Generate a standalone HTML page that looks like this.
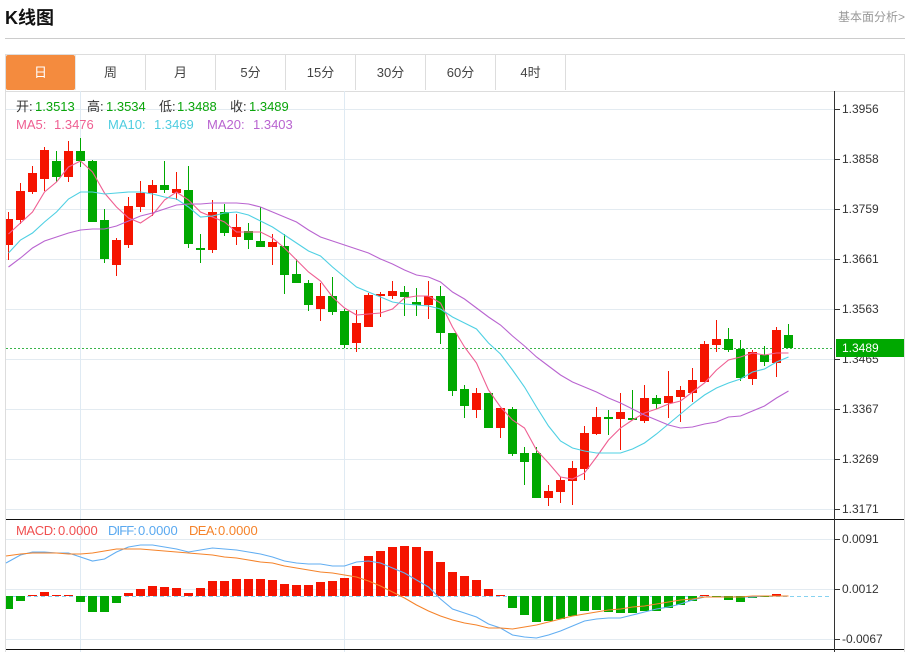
<!DOCTYPE html>
<html lang="zh">
<head>
<meta charset="utf-8">
<title>K线图</title>
<style>
html,body{margin:0;padding:0;background:#fff;}
body{width:911px;height:652px;overflow:hidden;position:relative;font-family:"Liberation Sans","Noto Sans CJK SC",sans-serif;}
.a{position:absolute;white-space:nowrap;}
.tab{position:absolute;top:55px;height:35px;width:69px;line-height:36px;text-align:center;font-size:13px;color:#444;border-right:1px solid #ddd;}
.l{font-size:13px;line-height:16px;}
.ax{position:absolute;left:842px;font-size:12px;line-height:14px;color:#333;white-space:nowrap;}
</style>
</head>
<body>
<div class="a" style="left:5px;top:7px;font-size:18px;line-height:22px;font-weight:bold;color:#111;">K线图</div>
<div class="a" style="left:838px;top:10px;font-size:12px;line-height:14px;color:#999;">基本面分析&gt;</div>
<div class="a" style="left:5px;top:38px;width:900px;height:1px;background:#ccc;"></div>

<div class="a" style="left:5px;top:54px;width:898px;height:36px;border:1px solid #ddd;"></div>
<div class="a" style="left:6px;top:55px;width:69px;height:35px;background:#f48b3e;border-radius:2px;"></div>
<div class="tab" style="left:6px;color:#fff;border-right:1px solid #e8e8e8;">日</div>
<div class="tab" style="left:76px;">周</div>
<div class="tab" style="left:146px;">月</div>
<div class="tab" style="left:216px;">5分</div>
<div class="tab" style="left:286px;">15分</div>
<div class="tab" style="left:356px;">30分</div>
<div class="tab" style="left:426px;">60分</div>
<div class="tab" style="left:496px;">4时</div>

<svg class="a" style="left:0;top:0;" width="911" height="652" viewBox="0 0 911 652" fill="none">
<!-- frame -->
<path d="M5.5 91V652M904.5 91V652" stroke="#ddd"/>
<!-- grid -->
<path d="M6 109.5H834M6 159.5H834M6 209.5H834M6 259.5H834M6 309.5H834M6 359.5H834M6 409.5H834M6 459.5H834M6 509.5H834M6 539.5H834M6 589.5H834M6 639.5H834" stroke="#e3ebf1"/>
<path d="M80.5 91V652M344.5 91V652" stroke="#dfeaf3"/>
<!-- last price -->
<path d="M6 348.5H834" stroke="#39b54a" stroke-dasharray="2 2"/>
<!-- green wicks -->
<path stroke="#00a800" d="M56.5 151V182M80.5 138V167M92.5 160V222M104.5 209V263M164.5 161V193M188.5 166V248M200.5 234V263M224.5 204V236M248.5 223V249M260.5 207V247M284.5 234V294M296.5 259V283M308.5 280V311M332.5 277V315M344.5 309V348M404.5 286V316M416.5 288V316M440.5 286V344M452.5 333V396M464.5 385V418M512.5 407V456M524.5 447V485M536.5 447V498M608.5 410V435M632.5 390V420M656.5 395V409M728.5 328V352M740.5 340V381M764.5 346V366M788.5 324V348"/>
<!-- green bodies -->
<path fill="#00a800" d="M52 161h9v16h-9zM76 151h9v10h-9zM88 161h9v61h-9zM100 220h9v39h-9zM160 185h9v5h-9zM184 190h9v54h-9zM196 248h9v2h-9zM220 212h9v21h-9zM244 231h9v9h-9zM256 241h9v6h-9zM280 246h9v29h-9zM292 274h9v9h-9zM304 283h9v22h-9zM328 296h9v16h-9zM340 311h9v34h-9zM400 292h9v5h-9zM412 302h9v3h-9zM436 296h9v37h-9zM448 333h9v58h-9zM460 389h9v17h-9zM484 393h9v35h-9zM508 409h9v45h-9zM520 453h9v9h-9zM532 453h9v45h-9zM604 417h9v2h-9zM628 418h9v2h-9zM652 398h9v6h-9zM724 339h9v11h-9zM736 349h9v29h-9zM760 355h9v7h-9zM784 335h9v13h-9z"/>
<!-- red wicks -->
<path stroke="#f51400" d="M8.5 212V260M20.5 183V224M32.5 166V194M44.5 147V191M68.5 141V182M116.5 238V276M128.5 197V248M140.5 181V212M152.5 180V216M176.5 172V200M212.5 200V253M236.5 214V245M272.5 234V265M320.5 283V321M356.5 310V352M368.5 293V327M380.5 292V317M392.5 281V299M428.5 281V319M476.5 388V418M500.5 408V438M548.5 485V506M560.5 477V503M572.5 461V505M584.5 426V480M596.5 407V435M620.5 393V450M644.5 385V423M668.5 371V418M680.5 386V422M692.5 368V402M704.5 341V382M716.5 320V352M752.5 350V385M776.5 327V377"/>
<!-- red bodies -->
<path fill="#f51400" d="M6 219h7v26H6zM16 191h9v29h-9zM28 173h9v19h-9zM40 150h9v29h-9zM64 151h9v26h-9zM112 240h9v25h-9zM124 206h9v39h-9zM136 193h9v14h-9zM148 185h9v8h-9zM172 189h9v4h-9zM208 212h9v38h-9zM232 227h9v10h-9zM268 242h9v5h-9zM316 296h9v13h-9zM352 323h9v20h-9zM364 295h9v32h-9zM376 294h9v2h-9zM388 291h9v5h-9zM424 296h9v9h-9zM472 393h9v17h-9zM496 408h9v20h-9zM544 491h9v7h-9zM556 480h9v12h-9zM568 468h9v13h-9zM580 433h9v36h-9zM592 417h9v17h-9zM616 412h9v7h-9zM640 398h9v23h-9zM664 396h9v7h-9zM676 390h9v7h-9zM688 380h9v13h-9zM700 344h9v38h-9zM712 339h9v6h-9zM748 352h9v27h-9zM772 330h9v33h-9z"/>
<!-- MA lines -->
<polyline stroke="#ef5f92" stroke-width="1.1" points="8.5,234 20.5,223 32.5,212 44.5,192 56.5,182 68.5,167 80.5,161 92.5,172 104.5,193 116.5,207 128.5,218 140.5,223 152.5,215 164.5,200 176.5,192 188.5,200 200.5,212 212.5,217 224.5,222 236.5,232 248.5,232 260.5,232 272.5,238 284.5,248 296.5,260 308.5,272 320.5,281 332.5,297 344.5,308 356.5,315 368.5,314 380.5,313 392.5,309 404.5,298 416.5,296 428.5,296 440.5,303 452.5,327 464.5,347 476.5,363 488.5,390 500.5,407 512.5,420 524.5,428 536.5,450 548.5,463 560.5,477 572.5,479 584.5,473 596.5,457 608.5,440 620.5,428 632.5,420 644.5,413 656.5,409 668.5,404 680.5,401 692.5,392 704.5,383 716.5,370 728.5,360 740.5,357 752.5,353 764.5,355 776.5,353 788.5,353"/>
<polyline stroke="#4fd0e3" stroke-width="1.1" points="8.5,253 20.5,240 32.5,233 44.5,222 56.5,212 68.5,199 80.5,192 92.5,192 104.5,194 116.5,193 128.5,192 140.5,192 152.5,194 164.5,197 176.5,199 188.5,207 200.5,217 212.5,216 224.5,213 236.5,212 248.5,215 260.5,221 272.5,227 284.5,235 296.5,243 308.5,251 320.5,256 332.5,267 344.5,277 356.5,287 368.5,292 380.5,297 392.5,302 404.5,304 416.5,305 428.5,306 440.5,309 452.5,317 464.5,323 476.5,329 488.5,343 500.5,354 512.5,370 524.5,387 536.5,407 548.5,426 560.5,441 572.5,448 584.5,451 596.5,453 608.5,453 620.5,453 632.5,449 644.5,443 656.5,434 668.5,424 680.5,414 692.5,404 704.5,395 716.5,388 728.5,383 740.5,379 752.5,372 764.5,369 776.5,362 788.5,357"/>
<polyline stroke="#b964d0" stroke-width="1.1" points="8.5,267 20.5,258 32.5,248 44.5,241 56.5,237 68.5,233 80.5,230 92.5,229 104.5,229 116.5,226 128.5,221 140.5,216 152.5,213 164.5,209 176.5,205 188.5,204 200.5,204 212.5,203 224.5,203 236.5,203 248.5,204 260.5,207 272.5,212 284.5,217 296.5,222 308.5,230 320.5,237 332.5,241 344.5,245 356.5,249 368.5,253 380.5,259 392.5,264 404.5,270 416.5,275 428.5,277 440.5,282 452.5,292 464.5,299 476.5,308 488.5,317 500.5,325 512.5,336 524.5,346 536.5,357 548.5,366 560.5,375 572.5,382 584.5,387 596.5,392 608.5,398 620.5,403 632.5,409 644.5,415 656.5,420 668.5,425 680.5,428 692.5,427 704.5,424 716.5,422 728.5,417 740.5,416 752.5,411 764.5,406 776.5,398 788.5,391"/>

<!-- MACD zero line -->
<path d="M6 596.5H832" stroke="#86d2f0" stroke-dasharray="4 3"/>
<!-- MACD bars -->
<path fill="#00a800" d="M6 596h7v13H6zM16 596h9v5h-9zM76 596h9v6h-9zM88 596h9v16h-9zM100 596h9v16h-9zM112 596h9v7h-9zM508 596h9v12h-9zM520 596h9v19h-9zM532 596h9v26h-9zM544 596h9v25h-9zM556 596h9v23h-9zM568 596h9v20h-9zM580 596h9v15h-9zM592 596h9v14h-9zM604 596h9v16h-9zM616 596h9v17h-9zM628 596h9v17h-9zM640 596h9v15h-9zM652 596h9v15h-9zM664 596h9v12h-9zM676 596h9v9h-9zM688 596h9v5h-9zM712 596h9v1h-9zM724 596h9v4h-9zM736 596h9v6h-9zM748 596h9v2h-9zM760 596h9v1h-9z"/>
<path fill="#f51400" d="M28 595h9v1h-9zM40 592h9v4h-9zM52 595h9v1h-9zM64 595h9v1h-9zM124 593h9v3h-9zM136 589h9v7h-9zM148 586h9v10h-9zM160 587h9v9h-9zM172 588h9v8h-9zM184 593h9v3h-9zM196 588h9v8h-9zM208 581h9v15h-9zM220 581h9v15h-9zM232 579h9v17h-9zM244 579h9v17h-9zM256 579h9v17h-9zM268 580h9v16h-9zM280 584h9v12h-9zM292 585h9v11h-9zM304 585h9v11h-9zM316 582h9v14h-9zM328 581h9v15h-9zM340 578h9v18h-9zM352 566h9v30h-9zM364 556h9v40h-9zM376 551h9v45h-9zM388 547h9v49h-9zM400 546h9v50h-9zM412 547h9v49h-9zM424 551h9v45h-9zM436 562h9v34h-9zM448 572h9v24h-9zM460 576h9v20h-9zM472 580h9v16h-9zM484 589h9v7h-9zM496 595h9v1h-9zM700 595h9v1h-9zM772 594h9v2h-9z"/>
<!-- DIFF / DEA -->
<polyline stroke="#62aef2" stroke-width="1.1" points="6,563 20.5,555 32.5,552 44.5,552 56.5,553 68.5,553 80.5,557 92.5,561 104.5,559 116.5,552 128.5,547 140.5,545 152.5,545 164.5,547 176.5,549 188.5,552 200.5,550 212.5,548 224.5,549 236.5,550 248.5,552 260.5,554 272.5,557 284.5,561 296.5,563 308.5,564 320.5,564 332.5,566 344.5,566 356.5,562 368.5,561 380.5,563 392.5,568 404.5,573 416.5,580 428.5,587 440.5,599 452.5,609 464.5,613 476.5,617 488.5,624 500.5,628 512.5,635 524.5,637 536.5,638 548.5,635 560.5,631 572.5,626 584.5,621 596.5,619 608.5,618 620.5,618 632.5,615 644.5,612 656.5,609 668.5,607 680.5,604 692.5,600 704.5,597 716.5,597 728.5,597 740.5,597 752.5,597 764.5,596 776.5,596 788.5,596"/>
<polyline stroke="#f5832a" stroke-width="1.1" points="6,556 20.5,554 32.5,553 44.5,553 56.5,553 68.5,554 80.5,554 92.5,553 104.5,551 116.5,549 128.5,549 140.5,549 152.5,550 164.5,551 176.5,552 188.5,553 200.5,554 212.5,555 224.5,557 236.5,558 248.5,560 260.5,562 272.5,563 284.5,566 296.5,568 308.5,570 320.5,572 332.5,573 344.5,575 356.5,577 368.5,581 380.5,586 392.5,592 404.5,598 416.5,605 428.5,611 440.5,616 452.5,620 464.5,623 476.5,625 488.5,628 500.5,628 512.5,629 524.5,627 536.5,625 548.5,622 560.5,619 572.5,616 584.5,614 596.5,612 608.5,610 620.5,609 632.5,607 644.5,606 656.5,604 668.5,602 680.5,600 692.5,599 704.5,597 716.5,597 728.5,597 740.5,597 752.5,596 764.5,596 776.5,596 788.5,596"/>

<!-- separators and axis -->
<path d="M6 519.5H904M6 649.5H904" stroke="#111"/>
<path d="M834.5 91V652" stroke="#333"/>
<path d="M834 109.5h6M834 159.5h6M834 209.5h6M834 259.5h6M834 309.5h6M834 359.5h6M834 409.5h6M834 459.5h6M834 509.5h6M834 539.5h6M834 589.5h6M834 639.5h6" stroke="#333"/>
</svg>

<!-- axis labels -->
<div class="ax" style="top:102px;">1.3956</div>
<div class="ax" style="top:152px;">1.3858</div>
<div class="ax" style="top:202px;">1.3759</div>
<div class="ax" style="top:252px;">1.3661</div>
<div class="ax" style="top:302px;">1.3563</div>
<div class="ax" style="top:352px;">1.3465</div>
<div class="ax" style="top:402px;">1.3367</div>
<div class="ax" style="top:452px;">1.3269</div>
<div class="ax" style="top:502px;">1.3171</div>
<div class="ax" style="top:532px;">0.0091</div>
<div class="ax" style="top:582px;">0.0012</div>
<div class="ax" style="top:632px;">-0.0067</div>
<div class="a" style="left:836px;top:339px;width:68px;height:18px;background:#00a800;"></div>
<div class="ax" style="top:341px;color:#fff;">1.3489</div>

<!-- legend -->
<div class="a l" style="left:16px;top:99px;color:#333;">开:</div><div class="a l" style="left:35px;top:99px;color:#0aa50a;">1.3513</div>
<div class="a l" style="left:87px;top:99px;color:#333;">高:</div><div class="a l" style="left:106px;top:99px;color:#0aa50a;">1.3534</div>
<div class="a l" style="left:159px;top:99px;color:#333;">低:</div><div class="a l" style="left:177px;top:99px;color:#0aa50a;">1.3488</div>
<div class="a l" style="left:230px;top:99px;color:#333;">收:</div><div class="a l" style="left:249px;top:99px;color:#0aa50a;">1.3489</div>

<div class="a l" style="left:16px;top:117px;color:#ef5f92;">MA5:</div><div class="a l" style="left:54px;top:117px;color:#ef5f92;">1.3476</div>
<div class="a l" style="left:108px;top:117px;color:#4fcde0;">MA10:</div><div class="a l" style="left:154px;top:117px;color:#4fcde0;">1.3469</div>
<div class="a l" style="left:207px;top:117px;color:#b964d0;">MA20:</div><div class="a l" style="left:253px;top:117px;color:#b964d0;">1.3403</div>

<div class="a l" style="left:16px;top:523px;color:#f05050;letter-spacing:-.4px;">MACD:</div><div class="a l" style="left:58px;top:523px;color:#f05050;">0.0000</div>
<div class="a l" style="left:108px;top:523px;color:#5aa9f0;letter-spacing:-.9px;">DIFF:</div><div class="a l" style="left:138px;top:523px;color:#5aa9f0;">0.0000</div>
<div class="a l" style="left:189px;top:523px;color:#f5832a;letter-spacing:-.6px;">DEA:</div><div class="a l" style="left:218px;top:523px;color:#f5832a;">0.0000</div>
</body>
</html>
